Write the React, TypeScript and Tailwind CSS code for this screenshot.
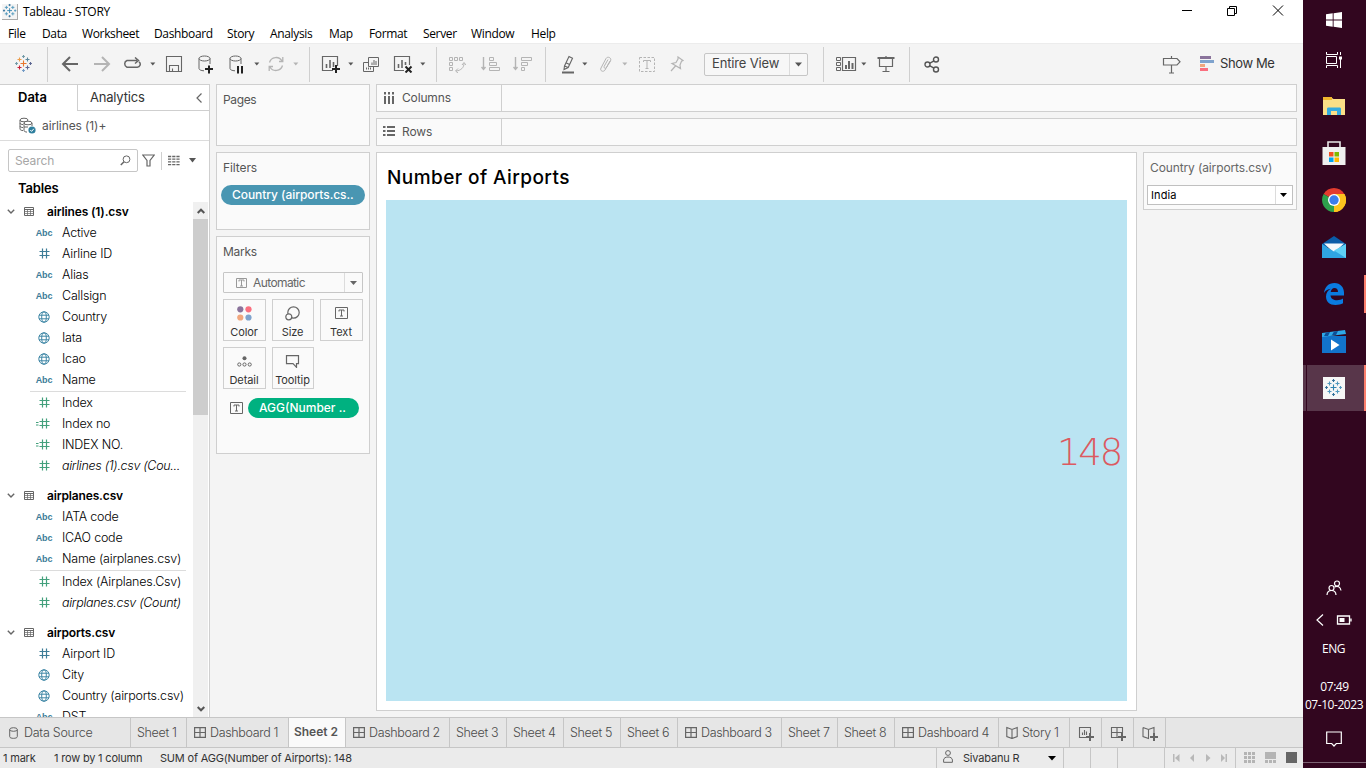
import React from "react";

const C = "#666";
const L = "#b4b4b4";

type SvgProps = { w: number; h: number; className?: string; children: React.ReactNode; stroke?: string; sw?: number };
const Svg = ({ w, h, className = "", children, stroke = C, sw = 1 }: SvgProps) => (
  <svg width={w} height={h} viewBox={`0 0 ${w} ${h}`} fill="none" stroke={stroke} strokeWidth={sw} className={`shrink-0 ${className}`}>
    {children}
  </svg>
);

const Sep = ({ className = "" }: { className?: string }) => <div className={`w-px h-[35px] shrink-0 bg-[#cfcfcf] ${className}`} />;
const Caret = ({ className = "", light = false }: { className?: string; light?: boolean }) => (
  <Svg w={6} h={4} className={className} stroke="none">
    <path d="M0.3 0.5h5L2.8 3.6z" fill={light ? "#b4b4b4" : "#555"} />
  </Svg>
);

const Plus = ({ x, y, s, c }: { x: number; y: number; s: number; c: string }) => (
  <path d={`M${x - s} ${y}h${2 * s}M${x} ${y - s}v${2 * s}`} stroke={c} />
);

const TableauMark = ({ colors, className = "" }: { colors: string[]; className?: string }) => (
  <Svg w={18} h={18} className={className} sw={1.1}>
    <Plus x={8.5} y={8.5} s={3} c={colors[0]} />
    <Plus x={4.5} y={4.5} s={2} c={colors[1]} />
    <Plus x={12.5} y={4.5} s={2} c={colors[2]} />
    <Plus x={4.5} y={12.5} s={2} c={colors[3]} />
    <Plus x={12.5} y={12.5} s={2} c={colors[4]} />
    <Plus x={8.5} y={1.5} s={1.4} c={colors[5]} />
    <Plus x={8.5} y={15.5} s={1.4} c={colors[6]} />
    <Plus x={1.5} y={8.5} s={1.4} c={colors[5]} />
    <Plus x={15.5} y={8.5} s={1.4} c={colors[4]} />
  </Svg>
);
const BLUES = ["#2f83b0", "#4f97bd", "#4f97bd", "#4f97bd", "#4f97bd", "#2f6f9a", "#2f6f9a"];

function Toolbar() {
  return (
    <div className="flex h-[41px] items-center bg-[#f4f4f4] border-t border-[#ececec]">
      <TableauMark className="ml-[15px]" colors={["#e8762c", "#eb9c4a", "#5b879b", "#c72037", "#5c6692", "#7199a6", "#7099c5"]} />
      <Sep className="ml-[14px]" />
      <Svg w={18} h={16} className="ml-[13px]" sw={2}><path d="M9 1L2 8l7 7M2 8h15" /></Svg>
      <Svg w={18} h={16} className="ml-[15px]" sw={2} stroke={L}><path d="M8 1l7 7-7 7M15 8H0" /></Svg>
      <Svg w={20} h={14} className="ml-[10px]" sw={1.5}><path d="M9 10.200H5A3.600 3.600 0 0 1 5 3.500H15M13 0.500l3.500 3-3.500 3M17 4.800A3 3 0 0 1 15 10.200H8" /></Svg>
      <Caret className="ml-[8px]" />
      <Svg w={18} h={18} className="ml-[9px]" sw={1.1}><path d="M1.500 1.500h15v15h-15zM4.500 16V10.500h9V16M7.500 16v-2.500" /></Svg>
      <Svg w={17} h={19} className="ml-[15px]">
        <ellipse cx={6.500} cy={3.500} rx={5.500} ry={2.500} /><path d="M1 3.500v10c0 1.200 2 2.200 5 2.300M12 3.500v5.500" /><path d="M11 10.500v8M7 14h8" stroke="#222" strokeWidth={2} />
      </Svg>
      <Svg w={15} h={19} className="ml-[14px]">
        <ellipse cx={6.500} cy={3.500} rx={5.500} ry={2.500} /><path d="M1 3.500v10c0 1.200 2 2.200 5 2.300M12 3.500v5.500" /><path d="M9 11v7.500M13 11v7.500" stroke="#222" strokeWidth={2} />
      </Svg>
      <Caret className="ml-[10px]" />
      <Svg w={18} h={16} className="ml-[7px]" stroke={L} sw={1.3}><path d="M2.500 6.500A6.800 6.800 0 0 1 15 5M15.500 9.500A6.800 6.800 0 0 1 3 11M15.800 1v4.500H12M2.200 15v-4.500H6" /></Svg>
      <Caret className="ml-[8px]" light />
      <Sep className="ml-[10px]" />
      <Svg w={20} h={18} className="ml-[11px]"><path d="M12 15.500H1.500V1.500h15V11" strokeWidth={1.2} /><path d="M5.500 13V9M9 13V5M12.500 12V7" strokeWidth={1.6} /><path d="M15 10v8M11 14h8" stroke="#222" strokeWidth={2} /></Svg>
      <Caret className="ml-[7px]" />
      <Svg w={18} h={17} className="ml-[8px]"><path d="M6.500 1.500h10v9h-10zM6.500 6.500h-5v9h10v-5M10 9V6.500M12 9V4M14 9V5M4.500 13.500v-2M6.500 13.500v-2M8.500 13.500v-2" /></Svg>
      <Svg w={20} h={18} className="ml-[13px]"><path d="M11 15.500H1.500V1.500h15V10" strokeWidth={1.2} /><path d="M5.500 13V9M9 13V5M12.500 10V7" strokeWidth={1.6} /><path d="M12.500 11.500l6 6M18.500 11.500l-6 6" stroke="#222" strokeWidth={2} /></Svg>
      <Caret className="ml-[7px]" />
      <Sep className="ml-[10px]" />
      <Svg w={18} h={18} className="ml-[11px]" stroke={L}><path d="M1.500 2.500h3v3h-3zM6.500 2.500h3v3h-3zM11.500 2.500h3v3h-3zM1.500 7.500h3v3h-3zM1.500 12.500h3v3h-3zM16 8.500c0 4-3 7-8 7.500M14 10l2-2.500 2 2.500M10 13.500L7.500 16 10 18" /></Svg>
      <Svg w={19} h={16} className="ml-[15px]" stroke={L}><path d="M2.500 1v12M.5 11l2 2.500 2-2.500" strokeWidth={1.4} /><path d="M8.500 1.500h4v3h-4zM8.500 6.500h7v3h-7zM8.500 11.500h10v3h-10z" /></Svg>
      <Svg w={19} h={16} className="ml-[13px]" stroke={L}><path d="M2.500 1v12M.5 11l2 2.500 2-2.500" strokeWidth={1.400} /><path d="M8.500 1.500h10v3h-10zM8.500 6.500h6v3h-6zM8.500 11.500h3v3h-3z" /></Svg>
      <Sep className="ml-[13px]" />
      <Svg w={14} h={19} className="ml-[15px]" sw={1.1}><path d="M3 14.500L3.500 11 8 1.500l3.500 1.700L7.200 12.500zM3.500 11L7.200 12.500M5.500 8l3 1.500" /><path d="M1 17.500h12" strokeWidth={2} /></Svg>
      <Caret className="ml-[7px]" />
      <Svg w={14} h={16} className="ml-[11px]" stroke={L}><path d="M11 5L7.500 11.500c-1 1.600-3.200.4-2.300-1.200L9 3.500M10 7L6 14c-1.500 2.500-5.500 1-4-2L7 2.500c1.500-2.600 6-.8 4.500 2.400L10 7.500" /></Svg>
      <Caret className="ml-[9px]" light />
      <Svg w={18} h={17} className="ml-[10px]" stroke={L}><path d="M1.500 1.500h15v14h-15z" strokeDasharray="2.500 1.500" /><path d="M5.500 6V4.500h7V6M9 4.500v8M7.500 12.500h3" /></Svg>
      <Svg w={14} h={16} className="ml-[14px]" stroke={L} sw={1.200}><path d="M8 1l5 3.500-1.500.8L10 9l.5 3.500L2 7.500 6 6.500 8 3zM5.500 10L1 15" /></Svg>
      <div className="ml-[20px] flex h-[23px] w-[104px] shrink-0 items-center rounded-[2px] border border-[#c6c6c6] bg-[#f7f7f7]">
        <span className="w-[84px] pl-[7px] text-[13px] tracking-[-0.15px] text-[#444]">Entire View</span>
        <div className="flex h-full flex-1 items-center justify-center border-l border-[#dcdcdc]">
          <svg width="8" height="5"><path d="M0 .5h7L3.500 4.500z" fill="#555" /></svg>
        </div>
      </div>
      <Sep className="ml-[15px]" />
      <Svg w={21} h={16} className="ml-[12px]"><path d="M.5 1.500h4v3h-4zM.5 6.500h4v3h-4zM.5 11.500h4v3h-4z" /><path d="M6.500 1.500h13v13h-13z" strokeWidth={1.2} /><path d="M10 13V9M13 13V5M16.500 13V7" strokeWidth={2} /></Svg>
      <Caret className="ml-[4px]" />
      <Svg w={18} h={17} className="ml-[10px]"><path d="M.5 2h17" strokeWidth={2} /><path d="M2.500 2v8.500h13V2M9 10.500v5M5.500 15.500h7M9 0v2" strokeWidth={1.200} /></Svg>
      <Sep className="ml-[14px]" />
      <Svg w={16} h={17} className="ml-[14px]" sw={1.400} stroke="#555"><circle cx={3.500} cy={8.500} r={2.500} /><circle cx={12} cy={3.500} r={2.500} /><circle cx={12} cy={13.500} r={2.500} /><path d="M5.500 7.300L10 4.800M5.500 9.700L10 12.200" /></Svg>
      <Svg w={19} h={19} className="ml-[222px]" sw={1.200}><path d="M1.500 3.500H15l3 3.300-3 3.200H1.500zM9.500 1v2.500M9.500 10v8M7 18h5" /></Svg>
      <Svg w={14} h={16} className="ml-[19px]" stroke="none"><path d="M0 0h11v3H0z" fill="#8a739b" /><path d="M0 4h14v3H0z" fill="#7fa3cd" /><path d="M0 8h5v3H0z" fill="#f1a77e" /><path d="M0 12h8v3H0z" fill="#fa6f7f" /></Svg>
      <span className="ml-[6px] whitespace-nowrap text-[13px] tracking-[-0.4px] text-[#333]">Show Me</span>
    </div>
  );
}

type Kind = "abc" | "num" | "geo" | "mnum" | "calc";
const FieldIcon = ({ kind }: { kind: Kind }) => {
  if (kind === "abc") return <span className="pt-[2px] font-['Liberation_Sans',sans-serif] text-[9px] font-bold leading-[11px] tracking-[-0.1px] text-[#3c7c97]">Abc</span>;
  if (kind === "geo")
    return <Svg w={12} h={12} stroke="#3f87a6" className="mr-[1px]"><circle cx={6} cy={6} r={5.200} /><ellipse cx={6} cy={6} rx={2.300} ry={5.200} /><path d="M1 4.200h10M1 7.800h10" /></Svg>;
  return (
    <Svg w={16} h={11} stroke={kind === "num" ? "#3c7c97" : "#43a07c"} sw={1.200}>
      <path d="M6.500 .5v10M10.500 .5v10M3.500 3.500h10M3.500 7.500h10" />
      {kind === "calc" && <path d="M-.5 4.500h3M-.5 7h3" />}
    </Svg>
  );
};

const Field = ({ kind, name, italic }: { kind: Kind; name: string; italic?: boolean }) => (
  <div className="flex h-[21px] shrink-0 items-center">
    <div className="ml-[34px] flex w-[20px] justify-center">
      <FieldIcon kind={kind} />
    </div>
    <span className={`ml-[8px] whitespace-nowrap pt-[2px] text-[12.5px] font-light text-black ${italic ? "italic tracking-[-0.3px]" : "tracking-[-0.22px]"}`}>{name}</span>
  </div>
);

const TableHead = ({ name }: { name: string }) => (
  <div className="flex h-[21px] shrink-0 items-center">
    <Svg w={8} h={5} className="ml-[7px]" sw={1.400}><path d="M.8 .8L4 4l3.200-3.200" /></Svg>
    <Svg w={10} h={9} className="ml-[9px]"><path d="M.5 .5h9v8h-9zM.5 2.500h9" /><path d="M.5 4.500h9M.5 6.500h9M3.500 3v5M6.500 3v5" opacity=".7" /></Svg>
    <span className="ml-[13px] whitespace-nowrap text-[12px] font-semibold tracking-[-0.15px] text-black">{name}</span>
  </div>
);
const Rule = () => <div className="mt-[1px] ml-[30px] h-px w-[156px] shrink-0 bg-[#dcdcdc]" />;

function DataPane() {
  return (
    <div className="flex w-[210px] shrink-0 flex-col border-r border-t border-[#cfcfcf] bg-white">
      <div className="flex h-[26px] shrink-0">
        <div className="flex w-[77px] items-center pl-[18px] text-[13px] font-semibold text-black">Data</div>
        <div className="flex flex-1 items-center justify-between border-b border-l border-[#cfcfcf] pl-[12px] pr-[7px] text-[13px] tracking-[-0.2px] text-[#333]">
          Analytics
          <Svg w={6} h={10} sw={1.200}><path d="M5.500 .5L1 5l4.500 4.500" /></Svg>
        </div>
      </div>
      <div className="flex h-[30px] shrink-0 items-center border-b border-[#dcdcdc]">
        <Svg w={17} h={17} className="ml-[19px]">
          <ellipse cx={5} cy={3} rx={4} ry={1.800} /><path d="M1 3v9c0 1 1.500 1.500 3 1.600M1 6c0 1 1.500 1.500 3 1.600M1 9c0 1 1.500 1.500 3 1.600" />
          <ellipse cx={9} cy={6} rx={4} ry={1.800} fill="#fff" /><path d="M5 6v7.500c0 1 1.500 1.500 3 1.600M13 6v3M5 10h4" />
          <circle cx={13} cy={13} r={3.600} fill="#2f7f9e" stroke="none" /><path d="M11.300 13l1.300 1.400 2.200-2.600" stroke="#fff" />
        </Svg>
        <span className="ml-[6px] text-[12px] tracking-[-0.1px] text-[#555]">airlines (1)+</span>
      </div>
      <div className="flex h-[39px] shrink-0 items-center">
        <div className="ml-[8px] flex h-[23px] w-[130px] items-center justify-between rounded-[2px] border border-[#c6c6c6] pl-[6px] pr-[6px] text-[12px] tracking-[-0.1px] text-[#a6a6a6]">
          Search
          <Svg w={11} h={11}><circle cx={6.500} cy={4.300} r={3.400} /><path d="M4 6.800L.8 10" strokeWidth={1.500} /></Svg>
        </div>
        <Svg w={13} h={13} className="ml-[4px]" sw={1.200}><path d="M.8 1h11.400L8 6.500v5.500H5V6.500z" /></Svg>
        <div className="ml-[6px] h-[18px] w-px bg-[#cfcfcf]" />
        <Svg w={12} h={11} className="ml-[6px]" sw={1.300}><path d="M0 1.500h12M0 4.200h12M0 6.900h12M0 9.600h12" strokeDasharray="3.200 1" /></Svg>
        <svg width="8" height="5" className="ml-[9px]"><path d="M0 0h7L3.500 4.500z" fill="#555" /></svg>
      </div>
      <div className="flex h-[21px] shrink-0 items-center pb-[3px] pl-[18px] text-[13px] font-semibold tracking-[-0.15px] text-black">Tables</div>
      <div className="flex min-h-0 flex-1">
        <div className="flex w-[193px] flex-col overflow-hidden">
          <TableHead name="airlines (1).csv" />
          <Field kind="abc" name="Active" />
          <Field kind="num" name="Airline ID" />
          <Field kind="abc" name="Alias" />
          <Field kind="abc" name="Callsign" />
          <Field kind="geo" name="Country" />
          <Field kind="geo" name="Iata" />
          <Field kind="geo" name="Icao" />
          <Field kind="abc" name="Name" />
          <Rule />
          <Field kind="mnum" name="Index" />
          <Field kind="calc" name="Index no" />
          <Field kind="calc" name="INDEX NO." />
          <Field kind="mnum" name="airlines (1).csv (Cou..." italic />
          <div className="h-[9px] shrink-0" />
          <TableHead name="airplanes.csv" />
          <Field kind="abc" name="IATA code" />
          <Field kind="abc" name="ICAO code" />
          <Field kind="abc" name="Name (airplanes.csv)" />
          <Rule />
          <Field kind="mnum" name="Index (Airplanes.Csv)" />
          <Field kind="mnum" name="airplanes.csv (Count)" italic />
          <div className="h-[9px] shrink-0" />
          <TableHead name="airports.csv" />
          <Field kind="num" name="Airport ID" />
          <Field kind="geo" name="City" />
          <Field kind="geo" name="Country (airports.csv)" />
          <Field kind="abc" name="DST" />
        </div>
        <div className="mt-[1px] flex w-[15px] flex-col items-center bg-[#f0f0f0]">
          <Svg w={8} h={6} className="mt-[6px]" sw={2} stroke="#555"><path d="M.7 5L4 1.700 7.300 5" /></Svg>
          <div className="mt-[5px] h-[196px] w-full bg-[#cdcdcd]" />
          <Svg w={8} h={6} className="mb-[5px] mt-auto" sw={2} stroke="#555"><path d="M.7 1L4 4.300 7.300 1" /></Svg>
        </div>
      </div>
    </div>
  );
}

const TBox = ({ w, h, c = C }: { w: number; h: number; c?: string }) => (
  <Svg w={w} h={h} stroke={c}>
    <path d={`M.5 .5h${w - 1}v${h - 1}h${1 - w}z`} />
    <path d={`M${w / 2 - 2.500} ${h / 2 - 1.500}v-1.500h5v1.500M${w / 2} ${h / 2 - 3}v6M${w / 2 - 1.500} ${h / 2 + 3}h3`} />
  </Svg>
);

const MarkButton = ({ label, icon, w = "w-[43px]" }: { label: string; icon: React.ReactNode; w?: string }) => (
  <div className={`${w} flex h-[42px] flex-col items-center border border-[#cfcfcf] bg-[#fafafa] pr-[1px]`}>
    <div className="flex h-[26px] items-center">{icon}</div>
    <span className="whitespace-nowrap text-[11px] leading-[13px] tracking-[-0.1px] text-[#333]">{label}</span>
  </div>
);

function Cards() {
  return (
    <div className="ml-[6px] flex w-[154px] shrink-0 flex-col text-[12px] text-[#555]">
      <div className="h-[62px] border border-[#cfcfcf] bg-[#fafafa] pl-[6px] pt-[6px] tracking-[-0.35px]">Pages</div>
      <div className="mt-[6px] h-[78px] border border-[#cfcfcf] bg-[#fafafa] px-[4px] pt-[6px]">
        <div className="pl-[2px] tracking-[-0.1px]">Filters</div>
        <div className="mt-[8px] flex h-[20px] w-[144px] items-center whitespace-nowrap rounded-full bg-[#4996b2] pl-[11px] text-[12px] font-medium tracking-[-0.05px] text-white">Country (airports.cs..</div>
      </div>
      <div className="mt-[6px] h-[218px] border border-[#cfcfcf] bg-[#fafafa] px-[6px] pt-[6px]">
        <div className="tracking-[-0.25px]">Marks</div>
        <div className="mt-[11px] flex h-[21px] w-[140px] items-center rounded-[1px] border border-[#c6c6c6] bg-[#fafafa]">
          <div className="ml-[12px]"><TBox w={11} h={10} c="#999" /></div>
          <span className="ml-[6px] w-[91px] text-[12px] tracking-[-0.6px] text-[#666]">Automatic</span>
          <div className="flex h-full flex-1 items-center justify-center border-l border-[#dcdcdc]"><svg width="7" height="4"><path d="M0 0h7L3.500 4z" fill="#666" /></svg></div>
        </div>
        <div className="mt-[6px] grid grid-cols-[43px_42px_43px] gap-[6px]">
          <MarkButton label="Color" icon={<Svg w={15} h={15} stroke="none"><circle cx={3.300} cy={3.300} r={3.100} fill="#8a739b" /><circle cx={11.500} cy={3.300} r={3.100} fill="#fa6f7f" /><circle cx={3.300} cy={11.500} r={3.100} fill="#f1a77e" /><circle cx={11.500} cy={11.500} r={3.100} fill="#7fa3cd" /></Svg>} />
          <MarkButton w="w-[42px]" label="Size" icon={<Svg w={15} h={15} sw={1.200}><circle cx={8.500} cy={6.500} r={5.700} /><circle cx={3.800} cy={10.800} r={3} fill="#fafafa" /></Svg>} />
          <MarkButton label="Text" icon={<TBox w={13} h={12} />} />
          <MarkButton label="Detail" icon={<Svg w={15} h={11}><circle cx={7.500} cy={2.200} r={2} fill={C} stroke="none" /><circle cx={2.300} cy={8.500} r={1.600} /><circle cx={7.500} cy={8.500} r={1.600} /><circle cx={12.700} cy={8.500} r={1.600} /></Svg>} />
          <MarkButton w="w-[42px]" label="Tooltip" icon={<Svg w={15} h={13} sw={1.200}><path d="M1.500 .7h12v8H11.500v3.600L8 8.700H1.500z" /></Svg>} />
        </div>
        <div className="mt-[9px] flex items-center">
          <div className="ml-[7px]"><TBox w={13} h={12} /></div>
          <div className="ml-[5px] flex h-[20px] w-[111px] items-center whitespace-nowrap rounded-full bg-[#00b180] pl-[11px] font-medium text-white">AGG(Number ..</div>
        </div>
      </div>
    </div>
  );
}

const Shelf = ({ name, icon, className = "" }: { name: string; icon: React.ReactNode; className?: string }) => (
  <div className={`flex h-[28px] shrink-0 border border-[#cfcfcf] bg-[#fafafa] ${className}`}>
    <div className="flex w-[125px] items-center border-r border-[#cfcfcf] pl-[6px] text-[12px] text-[#555]">
      {icon}
      <span className="ml-[7px] tracking-[-0.15px]">{name}</span>
    </div>
  </div>
);

function Canvas() {
  return (
    <div className="ml-[6px] mr-[6px] flex flex-1 flex-col">
      <Shelf name="Columns" icon={<Svg w={12} h={12}><path d="M2 0v2.500M6 0v2.500M10 0v2.500M2 4v8M6 4v8M10 4v8" strokeWidth={2} /></Svg>} />
      <Shelf className="mt-[6px]" name="Rows" icon={<Svg w={12} h={12}><path d="M0 1h2.500M0 5h2.500M0 9h2.500M4 1h8M4 5h8M4 9h8" strokeWidth={2} /></Svg>} />
      <div className="mt-[6px] flex flex-1">
        <div className="mb-[6px] flex w-[761px] flex-col border border-[#cfcfcf] bg-white px-[9px] pb-[9px]">
          <div className="flex h-[47px] items-center pl-[1px] pt-[4px] text-[19px] font-medium tracking-[0.43px] text-black">Number of Airports</div>
          <div className="flex flex-1 items-center justify-end bg-[#bae4f2] pr-[6px] pt-[4px]">
            <span className="font-['DejaVu_Sans',sans-serif] text-[37px] font-extralight leading-none tracking-[-2.2px] text-[#dc5a61]">148</span>
          </div>
        </div>
        <div className="ml-[6px] h-[58px] w-[154px] border border-[#cfcfcf] bg-[#fafafa] px-[3px] pt-[6px] text-[12px] text-[#666]">
          <div className="pl-[3px] tracking-[-0.12px]">Country (airports.csv)</div>
          <div className="mt-[8px] flex h-[20px] w-[146px] items-center border border-[#c0c0c0] bg-white text-[11px] text-black">
            <span className="w-[127px] pl-[3px] tracking-[0.1px]">India</span>
            <div className="flex h-full flex-1 items-center justify-center border-l border-[#dcdcdc]"><svg width="8" height="4"><path d="M0 0h7L3.500 4z" fill="#000" /></svg></div>
          </div>
        </div>
      </div>
    </div>
  );
}

const DashIcon = () => <Svg w={12} h={11} className="mb-[2px] ml-[1px] mr-[4px]" sw={1.200}><path d="M.6 .6h10.800v9.800H.6zM6 .6v9.800M.6 5.500h10.800" /></Svg>;
const BookIcon = () => <Svg w={12} h={13} className="mb-[2px] ml-[1px] mr-[4px]" sw={1.100}><path d="M.8 1.500L6 3.500l5.200-2v9L6 12.500l-5.200-2zM6 3.500v9" /></Svg>;
const Tab = ({ w, children }: { w: string; children: React.ReactNode }) => (
  <div className={`${w} flex shrink-0 items-center whitespace-nowrap border-r border-[#c6c6c6] pl-[6px] pt-[2px]`}>{children}</div>
);

function SheetTabs() {
  return (
    <div className="flex h-[31px] border-y border-[#c6c6c6] bg-[#e6e6e6] text-[12.5px] font-light tracking-[-0.34px] text-[#4a4a4a]">
      <Tab w="w-[131px]"><Svg w={9} h={12} className="mb-[2px] ml-[3px] mr-[6px]"><ellipse cx={4.500} cy={2.500} rx={3.800} ry={1.800} /><path d="M.7 2.500v7.200c0 2.200 7.600 2.200 7.600 0V2.500" /></Svg><span className="tracking-[-0.25px]">Data Source</span></Tab>
      <Tab w="w-[56px]">Sheet 1</Tab>
      <Tab w="w-[102px]"><DashIcon />Dashboard 1</Tab>
      <div className="flex w-[57px] shrink-0 items-center whitespace-nowrap border-r border-[#c6c6c6] bg-[#fafafa] pb-[1px] pl-[5px] text-[12px] font-semibold tracking-[-0.02px] text-[#555]">Sheet 2</div>
      <Tab w="w-[104px]"><DashIcon />Dashboard 2</Tab>
      <Tab w="w-[57px]">Sheet 3</Tab>
      <Tab w="w-[57px]">Sheet 4</Tab>
      <Tab w="w-[57px]">Sheet 5</Tab>
      <Tab w="w-[57px]">Sheet 6</Tab>
      <Tab w="w-[104px]"><DashIcon />Dashboard 3</Tab>
      <Tab w="w-[56px]">Sheet 7</Tab>
      <Tab w="w-[57px]">Sheet 8</Tab>
      <Tab w="w-[104px]"><DashIcon />Dashboard 4</Tab>
      <Tab w="w-[71px]"><BookIcon />Story 1</Tab>
      <Tab w="w-[32px]"><Svg w={18} h={16} className="ml-[2px]" sw={1.1}><path d="M9 11.500H1.500v-10h11V7M4.500 9V6.500M6.500 9V4M8.500 9V5.500" /><path d="M12 7v8M8 11h8" strokeWidth={2} /></Svg></Tab>
      <Tab w="w-[32px]"><Svg w={18} h={16} className="ml-[2px]" sw={1.1}><path d="M9 11.500H1.500v-10h11V7M7 1.500v10M1.500 6.500h11" /><path d="M12 7v8M8 11h8" strokeWidth={2} /></Svg></Tab>
      <Tab w="w-[32px]"><Svg w={18} h={16} className="ml-[2px]" sw={1.1}><path d="M1 1.500L6.500 3.500l5.500-2V7M1 1.500v9l5.500 2V3.500" /><path d="M12 7v8M8 11h8" strokeWidth={2} /></Svg></Tab>
    </div>
  );
}

function StatusBar() {
  return (
    <div className="flex h-[20px] items-center bg-[#ebebeb] text-[11px] tracking-[-0.19px] text-[#333]">
      <span className="w-[51px] whitespace-nowrap pl-[3px]">1 mark</span>
      <span className="ml-[3px] w-[106px] whitespace-nowrap">1 row by 1 column</span>
      <span className="w-[776px] whitespace-nowrap">SUM of AGG(Number of Airports): 148</span>
      <div className="flex h-full w-[128px] items-center border-x border-[#c6c6c6]">
        <Svg w={10} h={13} className="mb-[3px] ml-[6px]"><circle cx={5} cy={3} r={2.400} /><path d="M.6 12.300V10c0-4 8.800-4 8.800 0v2.300z" /></Svg>
        <span className="ml-[10px] w-[85px]">Sivabanu R</span>
        <svg width="8" height="5"><path d="M0 0h8L4 4.500z" fill="#000" /></svg>
      </div>
      <div className="h-full w-[27px] border-r border-[#c6c6c6]" />
      <div className="h-full w-[27px] border-r border-[#c6c6c6]" />
      <div className="h-full w-[47px] border-r border-[#c6c6c6]" />
      <div className="flex h-full w-[71px] items-center border-r border-[#c6c6c6] pl-[8px]">
        <svg width="56" height="8" fill="#b8b8b8"><path d="M0 0h1.500v8H0zM6.500 0v8L2 4zM21 0v8L17 4zM33 0v8l4.500-4zM48 0v8l4-4zM52.500 0H54v8h-1.500z" /></svg>
      </div>
      <svg width="54" height="12" className="ml-[8px] shrink-0" fill="#b4b4b4">
        <path d="M0 0h3v3H0zM4 0h3v3H4zM8 0h3v3H8zM0 4h3v3H0zM4 4h3v3H4zM8 4h3v3H8zM0 8h3v3H0zM4 8h3v3H4zM8 8h3v3H8zM21 0h11v7H21zM21 8h3v3h-3zM25 8h3v3h-3zM29 8h3v3h-3z" />
        <path d="M42 0h11v11H42z" fill="#666" />
      </svg>
    </div>
  );
}

function Taskbar() {
  return (
    <div className="flex h-[768px] w-[63px] shrink-0 flex-col items-center bg-[#32061f] pr-[2px] font-['Open_Sans',sans-serif] text-[12px] text-white">
      <svg width="16" height="16" fill="#fff" className="mt-[12px]"><path d="M0 2.300L6.700 1.300v6.200H0zM7.600 1.200L16 0v7.500H7.600zM0 8.500h6.700v6.200L0 13.700zM7.600 8.500H16V16l-8.400-1.200z" /></svg>
      <Svg w={18} h={16} className="mt-[24px]" stroke="#fff"><path d="M1.500 0v2.500h11V0M1.500 4.500h10v7h-10zM1.500 16v-2.500h11V16M15.500 0v3M15.500 7v9" /><path d="M14 4.500h3v3h-3z" fill="#fff" stroke="none" /></Svg>
      <svg width="22" height="19" className="mt-[29px]"><path d="M0 1h9l1.500 1H22v16H0z" fill="#fbdf87" /><path d="M0 0h9v3H0z" fill="#f0b72e" /><path d="M4 18v-6c0-1 .5-1.500 1.500-1.500h11c1 0 1.500.5 1.500 1.500v6h-4v-4H8v4z" fill="#35abe0" /></svg>
      <svg width="24" height="24" className="mt-[25px]"><path d="M6 7V1h12v6" fill="none" stroke="#e8e8e8" strokeWidth="1.600" /><path d="M.5 6h23v18H.5z" fill="#efefef" /><path d="M7 11h4.500v4.500H7z" fill="#f25022" /><path d="M12.500 11H17v4.500h-4.500z" fill="#7fba00" /><path d="M7 16.500h4.500V21H7z" fill="#00a4ef" /><path d="M12.500 16.500H17V21h-4.500z" fill="#ffb900" /></svg>
      <svg width="24" height="24" viewBox="0 0 24 24" className="mt-[23px]">
        <path d="M12 12L1.610 6A12 12 0 0 1 22.390 6z" fill="#e33b2e" />
        <path d="M12 12L22.390 6A12 12 0 0 1 12 24z" fill="#fcc31e" />
        <path d="M12 12L12 24A12 12 0 0 1 1.610 6z" fill="#2da14c" />
        <path d="M12 6h10.400A12 12 0 0 1 12 24l5.200-9z" fill="#fcc31e" />
        <circle cx="12" cy="12" r="6" fill="#fff" /><circle cx="12" cy="12" r="4.700" fill="#3b7ded" />
      </svg>
      <svg width="24" height="22" className="mt-[24px]"><path d="M0 8L12 0l12 8v3H0z" fill="#0a5ca8" /><path d="M2 7.500h20L12 17z" fill="#f4f8fb" /><path d="M0 8l12 7.500L24 8v14H0z" fill="#2fa5e2" /><path d="M24 8v14L12 14.500z" fill="#5fd0f5" /></svg>
      <div className="ml-[2px] mt-[17px] flex h-[38px] w-[63px] items-center justify-between">
        <div className="w-[1px]" />
        <svg width="20" height="22" viewBox="0 0 20 22"><path d="M0 10C.7 4 4.500 0 10.500 0 16.500 0 20 4.500 20 9.500v3H6.500c.3 3.200 3 4.700 6.500 4.700 2.500 0 4.500-.7 6-1.600v4.700c-2 1-4.500 1.700-7.500 1.700C5.500 22 2 18.500 2 13.500 2 10 4 7.300 7 5.800 4 6.200 1.500 7.500 0 10zM6.700 9H14c0-2.500-1.300-4-3.500-4S7 6.700 6.700 9z" fill="#0a7be0" /></svg>
        <div className="h-full w-[2px] bg-[#fb7f6d]" />
      </div>
      <svg width="24" height="24" className="mt-[17px]"><path d="M0 6h24v17H0z" fill="#1273cb" /><path d="M0 3L23 0l1 4L0 7z" fill="#2ea8e8" /><path d="M4 2.500l4-.5-2 4H2zM12 1.500l4-.5-2 4h-4z" fill="#0d4f99" /><path d="M9 9.500l8.500 5.500L9 20.500z" fill="#fff" /></svg>
      <div className="ml-[2px] mt-[11px] flex h-[46px] w-[63px] items-center justify-between bg-[#58364a]">
        <div className="h-full w-[4px] border-r border-[#32061f]" />
        <div className="mb-[1px] mr-[4px] flex h-[22px] w-[22px] items-center justify-center bg-[#f6f6f6]"><TableauMark colors={BLUES} className="ml-[1px] mt-[1px]" /></div>
        <div className="h-full w-[2px] bg-[#fb7f6d]" />
      </div>
      <Svg w={16} h={16} className="mt-[169px]" stroke="#fff" sw={1.200}><circle cx={5.500} cy={8} r={2.500} /><path d="M1 15c.3-6 8.700-6 9 0" /><circle cx={11} cy={3.500} r={2.500} /><path d="M8.500 7c3-1.800 6 .2 6.500 3.500" /></Svg>
      <div className="ml-[2px] mt-[18px] flex w-[63px] items-center">
        <Svg w={8} h={12} className="ml-[13px]" stroke="#fff" sw={1.200}><path d="M7 .5L1 6l6 5.500" /></Svg>
        <Svg w={16} h={10} className="ml-[12px]" stroke="#fff"><path d="M1.500 1h12v8h-12zM15 3.500v3" strokeWidth={1.300} /><path d="M3.500 3h5v4h-5z" fill="#fff" stroke="none" /></Svg>
      </div>
      <span className="mt-[14px] leading-[18px] tracking-[-0.5px]">ENG</span>
      <span className="mt-[20px] pl-[2px] leading-[18px] tracking-[-0.45px]">07:49</span>
      <span className="whitespace-nowrap pl-[1px] leading-[17px] tracking-[-0.45px]">07-10-2023</span>
      <Svg w={16} h={16} className="mt-[18px]" stroke="#fff" sw={1.200}><path d="M.7 1h14.600v11.500h-5L8 15l-2.300-2.500h-5z" /></Svg>
      <div className="ml-[2px] mt-[15px] h-px w-[63px] shrink-0 bg-[#7d6373]" />
    </div>
  );
}

export default function App() {
  return (
    <div className="flex h-[768px] w-[1366px] overflow-hidden bg-[#f4f4f4] font-[Inter,'Liberation_Sans',sans-serif]">
      <div className="flex w-[1303px] shrink-0 flex-col">
        <div className="flex h-[22px] items-center bg-white font-['Open_Sans',sans-serif] text-[12px] text-black">
          <div className="ml-[2px] mt-[1px] flex h-[16px] w-[16px] items-center justify-center border-b border-r border-[#aaa] bg-[#f4f4f4]"><TableauMark colors={BLUES} className="scale-[.8]" /></div>
          <span className="ml-[5px] pt-[1px] tracking-[-0.28px]">Tableau - STORY</span>
          <svg width="102" height="12" className="ml-auto mr-[19px]" stroke="#000" fill="none" strokeWidth="1"><path d="M0 5.500h10M45.500 3.500h7v7h-7zM47.500 3.500v-2h7v7h-2M91 .5l10 10M101 .5l-10 10" /></svg>
        </div>
        <div className="flex h-[21px] items-center bg-white pt-[2px] font-['Open_Sans',sans-serif] text-[12px] tracking-[-0.35px] text-black">
          <span className="w-[34px] pl-[8px]">File</span>
          <span className="ml-[8px] w-[40px]">Data</span>
          <span className="w-[72px]">Worksheet</span>
          <span className="w-[73px]">Dashboard</span>
          <span className="w-[43px]">Story</span>
          <span className="w-[59px]">Analysis</span>
          <span className="w-[40px]">Map</span>
          <span className="w-[54px]">Format</span>
          <span className="w-[48px]">Server</span>
          <span className="w-[60px]">Window</span>
          <span>Help</span>
        </div>
        <Toolbar />
        <div className="flex h-[633px]">
          <DataPane />
          <Cards />
          <Canvas />
        </div>
        <SheetTabs />
        <StatusBar />
      </div>
      <Taskbar />
    </div>
  );
}
